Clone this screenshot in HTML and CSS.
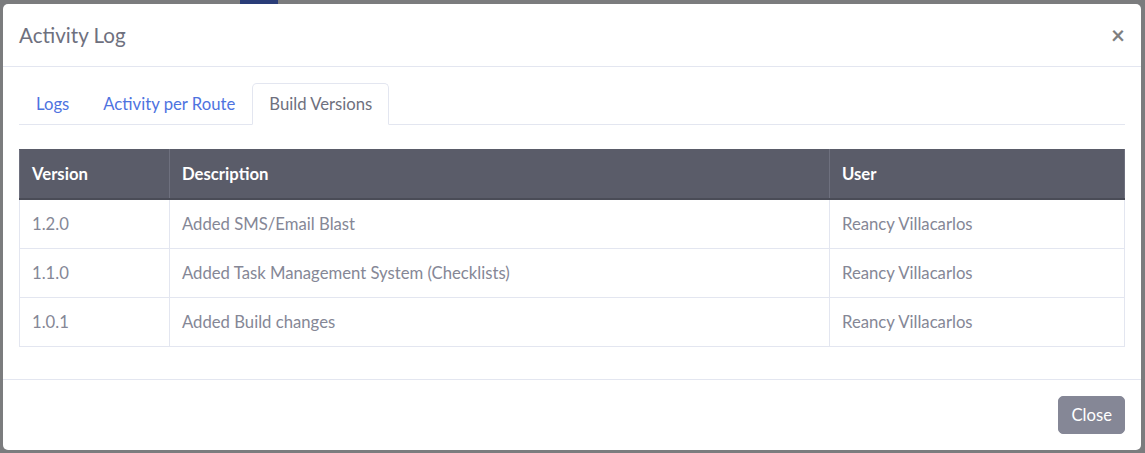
FILE: index.html
```html
<!DOCTYPE html>
<html>
<head>
<meta charset="utf-8">
<title>Activity Log</title>
<link rel="stylesheet" href="styles.css">
</head>
<body>
<div class="backdrop">
  <div class="bg-strip"><span class="bg-chip"></span></div>
  <div class="modal">
    <div class="modal-header">
      <h5 class="modal-title">Activity Log</h5>
      <button class="close" type="button">×</button>
    </div>
    <div class="modal-body">
      <ul class="tabs">
        <li class="tab"><a class="tab-link">Logs</a></li>
        <li class="tab"><a class="tab-link">Activity per Route</a></li>
        <li class="tab"><a class="tab-link active">Build Versions</a></li>
      </ul>
      <table class="versions">
        <thead>
          <tr><th class="c-ver">Version</th><th class="c-desc">Description</th><th class="c-user">User</th></tr>
        </thead>
        <tbody>
          <tr><td>1.2.0</td><td>Added SMS/Email Blast</td><td>Reancy Villacarlos</td></tr>
          <tr><td>1.1.0</td><td>Added Task Management System (Checklists)</td><td>Reancy Villacarlos</td></tr>
          <tr><td>1.0.1</td><td>Added Build changes</td><td>Reancy Villacarlos</td></tr>
        </tbody>
      </table>
    </div>
    <div class="modal-footer">
      <button class="btn-close" type="button">Close</button>
    </div>
  </div>
</div>
</body>
</html>
```

FILE: styles.css
```css
* { box-sizing: border-box; }
html, body { margin: 0; padding: 0; }
body {
  font-family: Lato, "Open Sans", sans-serif;
  font-size: 16.7px;
  color: #858796;
  background: #7b7c7e;
  width: 1145px;
  height: 453px;
  overflow: hidden;
}
.backdrop {
  position: relative;
  padding: 4px 4px 0 3px;
  height: 453px;
}
.bg-strip {
  position: absolute;
  top: 0; left: 0; right: 0;
  height: 4px;
}
.bg-chip {
  position: absolute;
  left: 240px; top: 0;
  width: 38px; height: 4px;
  background: #2a3d78;
}
.modal {
  position: relative;
  width: 1138px;
  background: #fff;
  border-radius: 5px;
  display: flex;
  flex-direction: column;
}
.modal-header {
  display: flex;
  align-items: flex-start;
  justify-content: space-between;
  padding: 16px;
  border-bottom: 1px solid #e3e6f0;
}
.modal-title {
  margin: 0;
  font-size: 20.6px;
  font-weight: 400;
  line-height: 30px;
  color: #6e707e;
}
.close {
  padding: 16px;
  margin: -16px -16px -16px auto;
  background: none;
  border: 0;
  font-family: Lato, sans-serif;
  font-size: 24px;
  font-weight: 700;
  line-height: 30px;
  color: #000;
  opacity: .5;
}
.modal-body {
  padding: 16px;
}
.tabs {
  list-style: none;
  margin: 0;
  padding: 0;
  display: flex;
  border-bottom: 1px solid #e3e6f0;
}
.tab { margin-bottom: -1px; }
.tab-link {
  display: block;
  padding: 8px 16px;
  line-height: 24px;
  color: #4e73df;
  border: 1px solid transparent;
  border-top-left-radius: 5px;
  border-top-right-radius: 5px;
}
.tab-link.active {
  color: #6e707e;
  background: #fff;
  border-color: #e3e6f0 #e3e6f0 #fff;
}
.versions {
  width: 100%;
  margin: 24px 0 16px;
  border-collapse: collapse;
  border: 1px solid #e3e6f0;
}
.versions th, .versions td {
  text-align: left;
  padding: 12px;
  line-height: 24px;
  border: 1px solid #e3e6f0;
  vertical-align: top;
}
.versions th {
  background: #5a5c69;
  color: #fff;
  font-weight: 700;
  border-color: #6e707e;
  border-bottom: 2px solid #4a4c57;
  border-top-color: #5a5c69;
}
.c-ver { width: 150px; }
.c-desc { width: 660px; }
.modal-footer {
  display: flex;
  justify-content: flex-end;
  padding: 12px;
  border-top: 1px solid #e3e6f0;
}
.btn-close {
  margin: 4px;
  padding: 6px 12px;
  font-family: Lato, sans-serif;
  font-size: 16.7px;
  line-height: 24px;
  color: #fff;
  background: #858796;
  border: 1px solid #858796;
  border-radius: 5px;
}
```
